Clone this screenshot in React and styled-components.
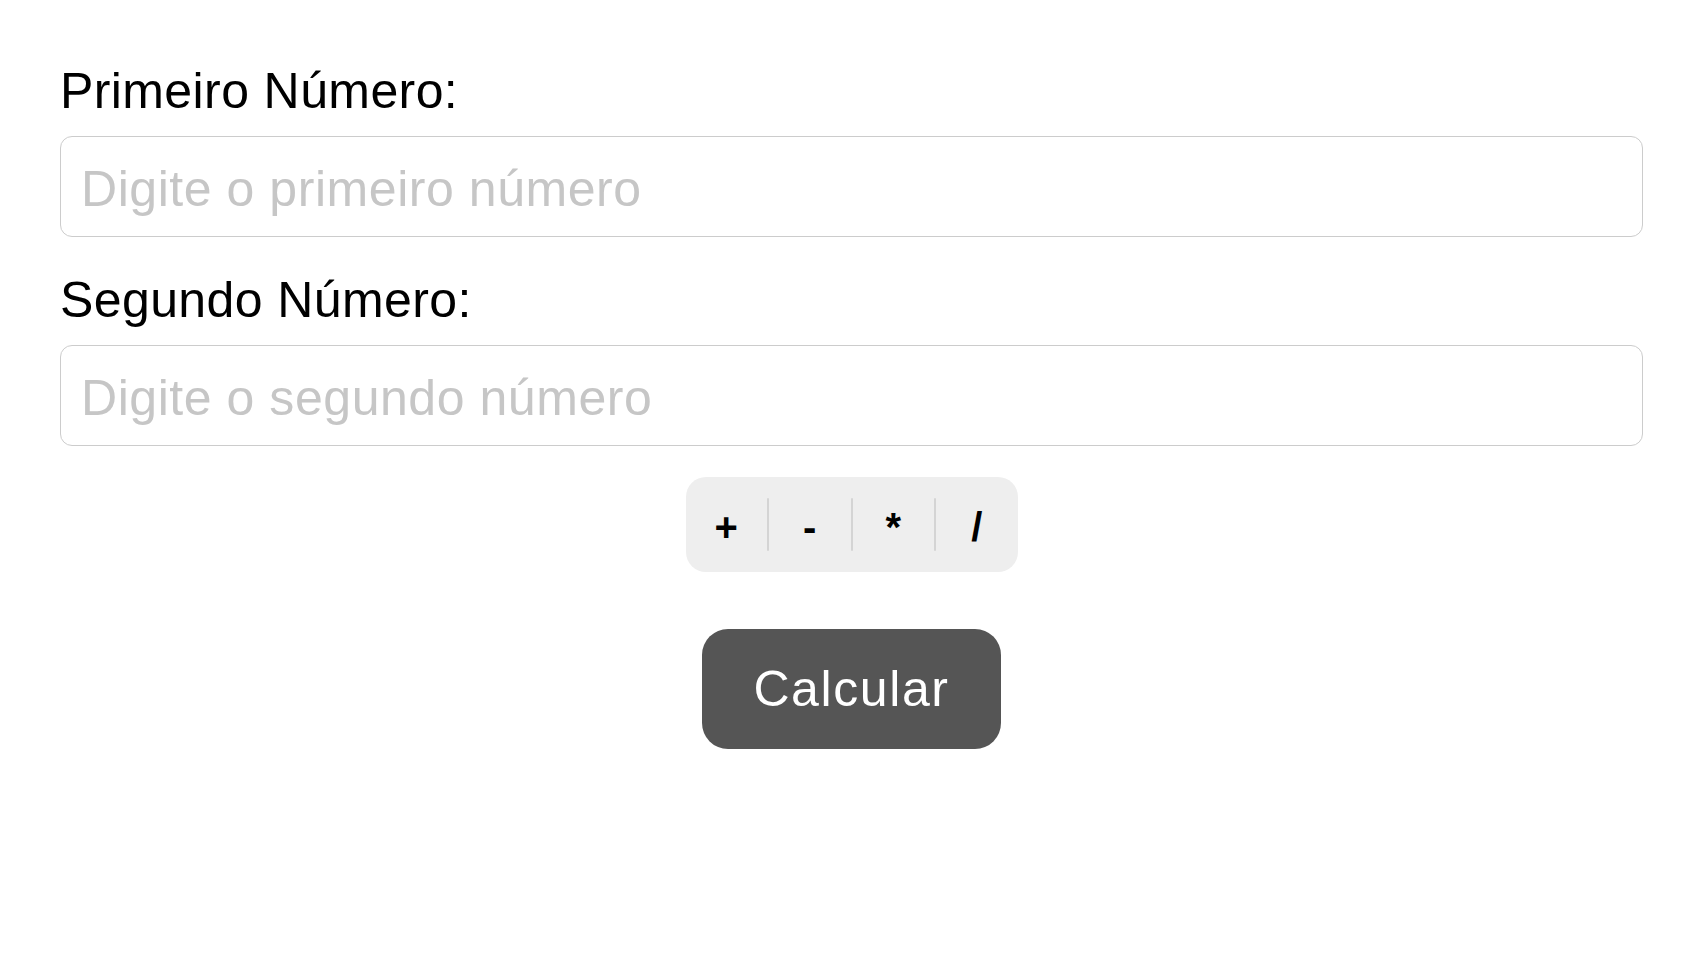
import React, { useState } from 'react';
import styled, { createGlobalStyle } from 'styled-components';

const GlobalStyle = createGlobalStyle`
  html, body {
    margin: 0;
    padding: 0;
    background: #ffffff;
  }
  body {
    font-family: "Liberation Sans", Arial, sans-serif;
  }
`;

const Screen = styled.div`
  display: flex;
  flex-direction: column;
  padding: 62px 61px 0 60px;
  min-height: 960px;
  box-sizing: border-box;
`;

const Label = styled.label`
  font-size: 50px;
  line-height: 58px;
  letter-spacing: 0.4px;
  color: #000;
  margin-top: ${(p) => (p.first ? '0' : '34px')};
`;

const Input = styled.input`
  margin-top: 16px;
  height: 101px;
  box-sizing: border-box;
  border: 1px solid #cccccc;
  border-radius: 12px;
  padding: 4px 20px 0;
  font-family: "Liberation Sans", Arial, sans-serif;
  font-size: 50px;
  letter-spacing: 0.55px;
  color: #000;
  outline: none;
  background: #fff;

  &::placeholder {
    color: #c6c6c6;
  }
`;

const Segmented = styled.div`
  align-self: center;
  display: flex;
  align-items: center;
  width: 332px;
  height: 95px;
  margin-top: 31px;
  background: #eeeeee;
  border-radius: 20px;
`;

const Segment = styled.button`
  flex: 1;
  height: 100%;
  border: none;
  background: ${(p) => (p.active ? '#e2e2e2' : 'transparent')};
  border-radius: 20px;
  padding: 6px 0 0;
  font-family: "Liberation Sans", Arial, sans-serif;
  font-size: 40px;
  font-weight: 700;
  color: #000;
  cursor: pointer;
`;

const Divider = styled.span`
  width: 2px;
  height: 53px;
  background: #d4d4d4;
  border-radius: 1px;
`;

const CalcButton = styled.button`
  align-self: center;
  width: 299px;
  height: 120px;
  margin-top: 57px;
  border: none;
  border-radius: 26px;
  background: #555555;
  color: #ffffff;
  font-family: "Liberation Sans", Arial, sans-serif;
  font-size: 50px;
  letter-spacing: 1.6px;
  padding: 0;
  cursor: pointer;
`;

const ops = ['+', '-', '*', '/'];

export default function App() {
  const [a, setA] = useState('');
  const [b, setB] = useState('');
  const [op, setOp] = useState(null);

  return (
    <>
      <GlobalStyle />
      <Screen>
        <Label first>Primeiro Número:</Label>
        <Input
          value={a}
          onChange={(e) => setA(e.target.value)}
          placeholder="Digite o primeiro número"
        />
        <Label>Segundo Número:</Label>
        <Input
          value={b}
          onChange={(e) => setB(e.target.value)}
          placeholder="Digite o segundo número"
        />
        <Segmented>
          {ops.map((o, i) => (
            <React.Fragment key={o}>
              {i > 0 && <Divider />}
              <Segment active={op === o} onClick={() => setOp(o)}>
                {o}
              </Segment>
            </React.Fragment>
          ))}
        </Segmented>
        <CalcButton>Calcular</CalcButton>
      </Screen>
    </>
  );
}
